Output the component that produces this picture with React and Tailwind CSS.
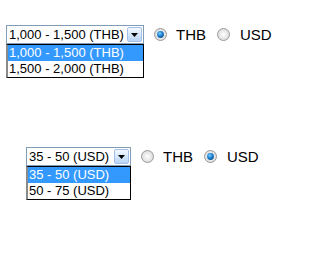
const font = { fontFamily: '"Liberation Sans", Arial, sans-serif' }

function Radio({ checked }) {
    return (
        <svg width="13" height="13" viewBox="0 0 13 13" className="shrink-0">
            <defs>
                <radialGradient id="rbg" cx="50%" cy="50%" r="60%">
                    <stop offset="0%" stopColor="#ffffff" />
                    <stop offset="100%" stopColor="#d4d4d4" />
                </radialGradient>
                <radialGradient id="rdot" cx="40%" cy="35%" r="70%">
                    <stop offset="0%" stopColor="#7fd0ff" />
                    <stop offset="55%" stopColor="#1a7fd0" />
                    <stop offset="100%" stopColor="#0c4f8a" />
                </radialGradient>
            </defs>
            <circle cx="6.5" cy="6.5" r="6" fill="url(#rbg)" stroke="#9a9a9a" strokeWidth="1" />
            {checked && <circle cx="6.5" cy="6.5" r="3.4" fill="url(#rdot)" />}
        </svg>
    )
}

function FakeSelect({ width, options }) {
    return (
        <div className="relative" style={{ width }}>
            <div className="flex h-[19px] items-center border border-[#7f9db9] bg-white">
                <span className="flex-1 pl-[2px] text-[13px] leading-none text-black">{options[0]}</span>
                <div className="mr-px flex h-[15px] w-[15px] items-center justify-center rounded-[2px] border border-[#a6bfe6] bg-gradient-to-b from-[#f3f8ff] to-[#b9d4f5]">
                    <svg width="7" height="4" viewBox="0 0 7 4">
                        <path d="M0 0h7L3.5 4z" fill="#000" />
                    </svg>
                </div>
            </div>
            <div className="absolute left-0 top-[19px] w-full border border-black border-l-[#8a8a8a] border-l-2 bg-white">
                {options.map((o, i) => (
                    <div
                        key={o}
                        className={
                            i === 0
                                ? "h-[16px] bg-[#3399ff] pl-px text-[13px] leading-[16px] text-white"
                                : "h-[16px] pl-px text-[13px] leading-[16px] text-black"
                        }
                    >
                        {o}
                    </div>
                ))}
            </div>
        </div>
    )
}

function Row({ width, options, usd, className }) {
    return (
        <div className={"flex h-[19px] items-center " + className}>
            <FakeSelect width={width} options={options} />
            <div className="ml-[10px] flex items-center text-[15px] leading-none text-black">
                <Radio checked={!usd} />
                <span className="ml-[9px]">THB</span>
                <span className="ml-[11px] flex"><Radio checked={usd} /></span>
                <span className="ml-[10px]">USD</span>
            </div>
        </div>
    )
}

export default function App() {
    return (
        <div className="h-[253px] w-[304px] bg-white pt-[25px]" style={font}>
            <Row
                className="pl-[6px]"
                width={138}
                options={["1,000 - 1,500 (THB)", "1,500 - 2,000 (THB)"]}
            />
            <Row
                className="mt-[103px] pl-[26px]"
                width={105}
                options={["35 - 50 (USD)", "50 - 75 (USD)"]}
                usd
            />
        </div>
    )
}
